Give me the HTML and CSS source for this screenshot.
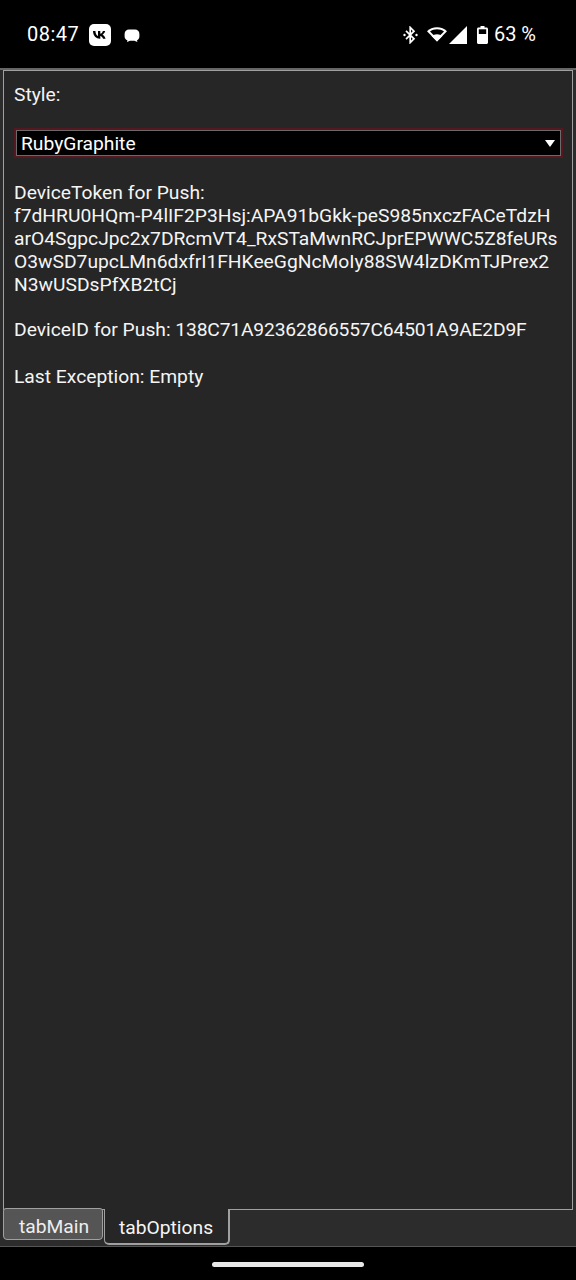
FILE: index.html
```html
<!DOCTYPE html>
<html lang="en">
<head>
  <meta charset="UTF-8">
  <title>tabOptions</title>
  <link rel="stylesheet" href="styles.css">
</head>
<body>
  <!-- Status bar -->
  <div class="status-bar">
    <div class="status-left">
      <span class="clock">08:47</span>
      <svg class="icon-vk" width="22" height="22" viewBox="0 0 22 22">
        <rect width="22" height="22" rx="5" fill="#fff"/>
        <path d="M4 7h2.400c.1 3.200 1.500 4.600 2.600 4.900V7h2.300v2.800c1.100-.1 2.200-1.400 2.600-2.800h2.300c-.4 1.800-1.700 3.100-2.600 3.700.9.5 2.400 1.700 3 4h-2.500c-.5-1.500-1.700-2.700-2.800-2.800v2.800H11C7 14.700 4.100 11.900 4 7z" fill="#000"/>
      </svg>
      <svg class="icon-chat" width="16" height="14" viewBox="0 0 16 14">
        <path d="M5 .5h6c2.400 0 4.400 1.800 4.400 4.400v2.400c0 2-1 3.400-2.400 4l.4 1.800-3-1.400H6l-3 1.400.4-1.800C1.600 10.700.6 9.300.6 7.300V4.900C.6 2.300 2.600.5 5 .5z" fill="#fff"/>
      </svg>
    </div>
    <div class="status-right">
      <svg class="icon-bt" width="15" height="18" viewBox="0 0 15 18">
        <path d="M3 4.800l8 8-3.800 3.800V1.400L11 5.200l-8 8" fill="none" stroke="#fff" stroke-width="1.700"/>
        <circle cx="1.500" cy="9" r="1.200" fill="#fff"/>
        <circle cx="13.500" cy="9" r="1.200" fill="#fff"/>
      </svg>
      <svg class="icon-wifi" width="20" height="15" viewBox="0 0 20 15">
        <path d="M10 14.500L0 4.200C2.600 1.700 6.100.3 10 .3s7.400 1.400 10 3.900z" fill="#fff"/>
        <path d="M10 11.500L3 4.500C4.900 3 7.300 2.300 10 2.300s5.100.7 7 2.200z" fill="#000"/>
        <path d="M10 14.500L4.600 9c1.400-1.100 3.300-1.800 5.400-1.800s4 .7 5.400 1.800z" fill="#fff"/>
      </svg>
      <svg class="icon-signal" width="18" height="18" viewBox="0 0 18 18">
        <path d="M18 0v18H0z" fill="#fff"/>
      </svg>
      <svg class="icon-battery" width="11" height="18" viewBox="0 0 11 18">
        <path d="M3.500 0h4v1.500h2c.8 0 1.500.7 1.500 1.500v13.500c0 .8-.7 1.500-1.500 1.500h-8C.7 18 0 17.300 0 16.500V3c0-.8.7-1.500 1.500-1.500h2z" fill="#fff"/>
        <rect x="1.800" y="3.300" width="7.400" height="4.700" fill="#000"/>
      </svg>
      <span class="battery-text">63 %</span>
    </div>
  </div>

  <!-- Tab control -->
  <div class="tab-control">
    <div class="tab-page">
      <div class="field-label">Style:</div>
      <div class="style-select">
        <div class="select-inner">
          <span>RubyGraphite</span>
          <span class="select-arrow"></span>
        </div>
      </div>
      <div class="info-block token">DeviceToken for Push:<br>f7dHRU0HQm-P4lIF2P3Hsj:APA91bGkk-peS985nxczFACeTdzHarO4SgpcJpc2x7DRcmVT4_RxSTaMwnRCJprEPWWC5Z8feURsO3wSD7upcLMn6dxfrI1FHKeeGgNcMoIy88SW4lzDKmTJPrex2N3wUSDsPfXB2tCj</div>
      <div class="info-block">DeviceID for Push: <span class="device-id">138C71A92362866557C64501A9AE2D9F</span></div>
      <div class="info-block last-exception">Last Exception: Empty</div>
    </div>
    <div class="tab-strip">
      <div class="tab tab-inactive">tabMain</div>
      <div class="tab tab-active">tabOptions</div>
    </div>
  </div>

  <!-- Navigation bar -->
  <div class="nav-bar">
    <div class="nav-handle"></div>
  </div>
</body>
</html>
```

FILE: styles.css
```css
html, body {
  height: 100%;
}

body {
  margin: 0;
  background-color: #000;
  color: #f5f5f5;
  font-family: Roboto, sans-serif;
  font-size: 19.25px;
  line-height: 23px;
  display: flex;
  flex-direction: column;
  overflow: hidden;
}

.status-bar {
  height: 68px;
  flex-shrink: 0;
  display: flex;
  justify-content: space-between;
  align-items: center;
  padding: 0 40px 0 27px;
  color: #fff;
}

.status-left,
.status-right {
  display: flex;
  align-items: center;
}

.clock {
  font-size: 20px;
  letter-spacing: 0.5px;
}

.icon-vk {
  margin-left: 10px;
  margin-top: 1px;
}

.icon-chat {
  margin-left: 13px;
  margin-top: 3px;
}

.icon-bt {
  margin-top: 2px;
}

.icon-wifi {
  margin-left: 9px;
  margin-top: 1px;
}

.icon-signal {
  margin-left: 2px;
  margin-top: 1px;
}

.icon-battery {
  margin-left: 10px;
  margin-top: 1px;
}

.battery-text {
  margin-left: 6px;
  font-size: 20px;
}

.tab-control {
  flex: 1;
  display: flex;
  flex-direction: column;
  padding: 0 3px 0 3px;
  background-color: #2c2c2c;
  border-top: 2px solid #666;
  border-bottom: 1px solid #555;
}

.tab-page {
  flex: 1;
  border: 1px solid #a0a0a0;
  background-color: #262626;
  padding: 12px 10px 0 10px;
}

.field-label {
  height: 23px;
}

.style-select {
  margin-top: 22px;
  margin-right: -1px;
  border: 2px solid #551820;
}

.select-inner {
  height: 24px;
  background-color: #000;
  border: 1px solid #6a6a6a;
  color: #fff;
  padding: 0 4px;
  display: flex;
  justify-content: space-between;
  align-items: center;
}

.select-arrow {
  width: 0;
  height: 0;
  border-left: 5px solid transparent;
  border-right: 5px solid transparent;
  border-top: 7px solid #fff;
  margin-right: 1px;
}

.info-block {
  margin-bottom: 23px;
  padding-right: 3px;
  word-break: break-all;
}

.token {
  margin-top: 23px;
  margin-bottom: 22px;
}

.device-id {
  letter-spacing: -0.17px;
}

.last-exception {
  margin-top: 24px;
}

.tab-strip {
  height: 36px;
  flex-shrink: 0;
  display: flex;
  align-items: flex-start;
}

.tab {
  box-sizing: border-box;
  text-align: center;
  border: 1px solid #a0a0a0;
}

.tab-inactive {
  width: 100px;
  height: 32px;
  margin-top: -2px;
  padding-left: 2px;
  background-color: #555;
  border-radius: 3px 3px 4px 4px;
  line-height: 35px;
  color: #eee;
}

.tab-active {
  width: 126px;
  height: 36px;
  margin-top: -1px;
  margin-left: 1px;
  padding-right: 1px;
  background-color: #262626;
  border-top: none;
  border-right-width: 2px;
  border-bottom-width: 2px;
  border-radius: 0 0 5px 5px;
  line-height: 38px;
}

.nav-bar {
  height: 33px;
  flex-shrink: 0;
  display: flex;
  justify-content: center;
  align-items: center;
}

.nav-handle {
  width: 152px;
  height: 5px;
  margin-top: 1px;
  border-radius: 3px;
  background-color: #e8e8e8;
}
```
